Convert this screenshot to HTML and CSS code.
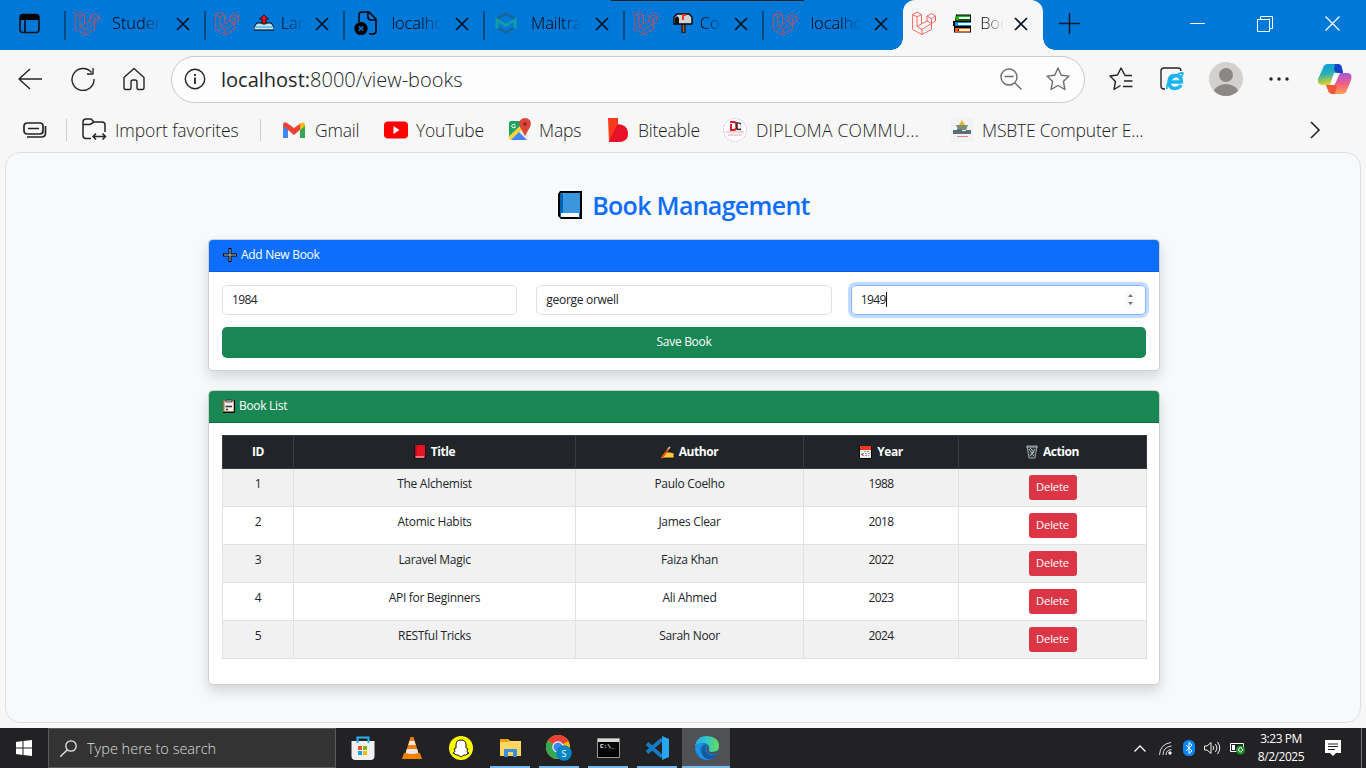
FILE: index.html
```html
<!DOCTYPE html>
<html lang="en">
<head>
<meta charset="utf-8">
<title>Book Management</title>
<link rel="stylesheet" href="styles.css">
</head>
<body>
<svg class="defs" width="0" height="0">
  <symbol id="laravel" viewBox="0 0 24 24"><path fill="none" stroke="currentColor" stroke-width="1" stroke-linejoin="round" d="M.6 3.500 5 1l4.500 2.500L5 6ZM.6 3.500v15L10 23.500l9.500-5v-6L23.500 10V5l-4.200-2.500L15 5v5l-5.500 3V3.500M5 6v9.500l5 2.800 9.500-5.800M5 15.500 9.500 13M10 18.300v5.200M15 5l4.500 2.700L23.500 5M19.500 7.700v4.800L15 10"/></symbol>
  <symbol id="close" viewBox="0 0 14 14"><path d="m1 1 12 12M13 1 1 13" fill="none" stroke="currentColor" stroke-width="1.700"/></symbol>
</svg>
<header class="tabs">
  <div class="tab-actions"><svg width="22" height="22" viewBox="0 0 22 22"><rect x="1" y="1.500" width="19" height="18" rx="3" fill="none" stroke="#101010" stroke-width="1.600"/><path d="M1 7V4q0-3 3-3h13q3 0 3 3v3Z" fill="#000"/><path d="M6 7v12" stroke="#000" stroke-width="1.500"/></svg></div>
  <div class="tab"><svg class="fav"><use href="#laravel"/></svg><span class="tt">Studen</span><svg class="x"><use href="#close"/></svg></div>
  <div class="tab"><svg class="fav"><use href="#laravel"/></svg><span class="tt emo"><svg width="20" height="18" viewBox="0 0 20 18"><path d="M3 9h14l3 4v3H0v-3Z" fill="#b9e6f7" stroke="#000"/><path d="M1 13h18" stroke="#78bfe0" stroke-width="2"/><path d="M10 1 5.500 5H8v5h4V5h2.500Z" fill="#f1121e" stroke="#000" stroke-width=".8"/></svg>Lar</span><svg class="x"><use href="#close"/></svg></div>
  <div class="tab"><svg class="fav" viewBox="0 0 24 24"><path d="M5 11V4q0-3 3-3h7l7 7v12q0 3-3 3h-4M14 1v5q0 3 3 3h5" fill="none" stroke="#000" stroke-width="1.500"/><circle cx="7" cy="17.500" r="6.600"/><path d="m4.700 15.200 4.600 4.600m0-4.600-4.600 4.600" stroke="#0078d7" stroke-width="1.500"/></svg><span class="tt">localho</span><svg class="x"><use href="#close"/></svg></div>
  <div class="tab"><svg class="fav" viewBox="0 0 24 24"><path d="M2 7 12 1l10 6-2 1.500-8-4-8 4ZM2 17l10 6 10-6-2-1.500-8 4-8-4Z" fill="#17659f"/><path d="M3 17.500V9l9 5.500L21 9v8.500" fill="none" stroke="#129da9" stroke-width="3"/></svg><span class="tt">Mailtra</span><svg class="x"><use href="#close"/></svg></div>
  <div class="tab"><svg class="fav"><use href="#laravel"/></svg><span class="tt emo"><svg width="20" height="20" viewBox="0 0 20 20"><path d="M9 11h3v9H9Z" fill="#a8552c" stroke="#000"/><path d="M1 11V4l3-3h12l3 3v7Z" fill="#d2d3d5" stroke="#000" stroke-width="1.400"/><path d="M2 5 4 3l2 2v6H2Z" fill="#111"/><path d="M9 1h4v2h-2v4H9Z" fill="#f03a17"/></svg>Co</span><svg class="x"><use href="#close"/></svg></div>
  <div class="tab"><svg class="fav"><use href="#laravel"/></svg><span class="tt">localho</span><svg class="x"><use href="#close"/></svg></div>
  <div class="tab active"><svg class="fav"><use href="#laravel"/></svg><span class="tt emo"><svg width="20" height="19" viewBox="0 0 20 19"><path d="M3 .5h15v18H1V12H0V7h2Z" /><path d="M4 1.500h13v2H6v2h11v1H3V3Z" fill="#1db31b"/><path d="M6 3h11v2H6ZM4 9h14v2H4ZM6 15h11v2H6Z" fill="#fff"/><path d="M2 8h16v1H5v2h13v1H2Z" fill="#1687d9"/><path d="M2 14h15v1H5v2h12v1H2Z" fill="#f4610d"/></svg>Boo</span><svg class="x"><use href="#close"/></svg></div>
  <svg class="plus" width="21" height="21" viewBox="0 0 21 21"><path d="M10.500 0v21M0 10.500h21" stroke="#001b33" stroke-width="1.500"/></svg>
  <div class="win"><svg width="15" height="15"><path d="M0 7.500h15" stroke="#fff"/></svg><svg width="16" height="16" fill="none" stroke="#fff"><rect x=".5" y="3.500" width="12" height="12"/><path d="M3.500 3V.5h12v12H13"/></svg><svg width="15" height="15"><path d="m.5.5 14 14m0-14-14 14" stroke="#fff" stroke-width="1.200"/></svg></div>
  <i class="strip"></i>
</header>
<nav class="toolbar">
  <svg class="ic back" viewBox="0 0 24 24"><path d="M24 12H1M12 2 1 12l11 10"/></svg>
  <svg class="ic reload" viewBox="0 0 24 24"><path d="M20.500 5.500A11 11 0 1 0 23 12M22 1v6h-6"/></svg>
  <svg class="ic home" viewBox="0 0 24 24"><path d="M2 10.500 12 1.500l10 9V21q0 1.500-1.500 1.500h-4Q15 22.500 15 21v-6q0-2-2-2h-2q-2 0-2 2v6q0 1.500-1.500 1.500h-4Q2 22.500 2 21Z"/></svg>
  <div class="address">
    <svg class="ic info" viewBox="0 0 22 22"><circle cx="11" cy="11" r="9.700"/><path d="M11 9.500V16M11 6v2" stroke-width="1.800"/></svg>
    <span class="url"><b>localhost:</b>8000/view-books</span>
    <svg class="ic mag" viewBox="0 0 22 22"><circle cx="9" cy="9" r="8"/><path d="m15 15 6.500 6.500M4.500 8.500h9"/></svg>
    <svg class="ic star" viewBox="0 0 24 24"><path d="m12 1 3.300 7.200 7.700.9-5.600 5.300 1.500 8.100L12 18.500l-6.900 4 1.500-8.100L1 9.100l7.700-.9Z"/></svg>
  </div>
  <svg class="ic favs" viewBox="0 0 24 24"><path d="M23 8.500h-7L12 1 8.500 8 1 9l5.500 5.500L5 22.500l6.500-4M15 14h8.500M14 19.500h9.500"/></svg>
  <svg class="ic ie" viewBox="0 0 24 24"><path d="M5 22H4q-3 0-3-3V4q0-3 3-3h14q3 0 3 3"/><g fill="none" stroke="#19b4ef"><path d="M21 18q-2 3.500-6 3.500-6 0-6-6.500t6-6.500q6.500 0 6.500 6.500H10" stroke-width="3.500"/><path d="M7 22q-2-5 7-12 6-5 9-4-.5 3-2 4" stroke-width="1.700"/></g></svg>
  <svg class="avatar" viewBox="0 0 34 34"><clipPath id="av"><circle cx="17" cy="17" r="17"/></clipPath><g clip-path="url(#av)"><path d="M0 0h34v34H0Z" fill="#d3d0cd"/><circle cx="17" cy="13" r="7" fill="#8b8786"/><ellipse cx="17" cy="31" rx="12.500" ry="9" fill="#8b8786"/></g></svg>
  <svg class="dots" width="20" height="4"><circle cx="2" cy="2" r="1.700"/><circle cx="10" cy="2" r="1.700"/><circle cx="18" cy="2" r="1.700"/></svg>
  <svg class="copilot" viewBox="0 0 34 32"><defs><linearGradient id="c1" x2=".2" y2="1"><stop stop-color="#1597e5"/><stop offset=".5" stop-color="#22b1b5"/><stop offset="1" stop-color="#e6cf24"/></linearGradient><linearGradient id="c2" x2="0" y2="1"><stop stop-color="#a358dc"/><stop offset=".5" stop-color="#ef5c87"/><stop offset="1" stop-color="#ffa04e"/></linearGradient></defs><path d="M10 1h9q4 0 5 4l1 5h-6q-3 0-4 3l-3 9H5q-6 0-5-6L5 5q1-4 5-4Z" fill="url(#c1)"/><path d="M17 1h3q3 0 4 4l1 5h-5q-3 0-4-4Z" fill="#1843c8"/><path d="M24 31h-9q-4 0-5-4l-2-5h6q3 0 4-3l4-9h7q6 0 4 7l-4 10q-1 4-5 4Z" fill="url(#c2)"/><path d="M17 31h-2q-4 0-5-4l-2-5h6l5 1Z" fill="#f15736"/><path d="m16 10 5 0-5 12h-4Z" fill="#fff"/></svg>
</nav>
<nav class="marks">
  <svg class="m-work" width="24" height="16" fill="none" stroke="#242424" stroke-width="1.700"><rect x="1" y="1" width="19" height="11" rx="3"/><path d="M5 6.500h11M22.500 4v7q0 4-4 4H4"/></svg>
  <i class="sep"></i>
  <span class="mk k1"><svg width="25" height="24" viewBox="0 0 25 24" fill="none" stroke="#242424" stroke-width="1.500"><path d="M9 20.500H4q-3 0-3-3V4q0-3 3-3h5l3 3h8q3 0 3 3v7M1 6.500h7L12 4M11 18.500h12M14 15.500l-3 3 3 3M20.500 15.500l3 3-3 3"/></svg>Import favorites</span>
  <i class="sep"></i>
  <span class="mk k2"><svg width="22" height="17" viewBox="0 0 22 17"><path d="M0 3v13h5V7Z" fill="#4285f4"/><path d="M17 7v9h5V3Z" fill="#34a853"/><path d="M0 3q0-4 4-2l7 5 7-5v6l-7 6-6-5-5-4Z" fill="#ea4335"/><path d="M17 2q5-4 5 2l-5 4Z" fill="#fbbc04"/></svg>Gmail</span>
  <span class="mk k3"><svg width="24" height="18" viewBox="0 0 24 18"><rect width="24" height="17" y=".5" rx="4" fill="#f00"/><path d="m9.500 5 6 4-6 4Z" fill="#fff"/></svg>YouTube</span>
  <span class="mk k4"><svg width="24" height="24" viewBox="0 0 24 24"><path d="M2 3h18v19H2Z" fill="#dce5e2"/><path d="M2 5q0-2 2-2h10v8L2 20Z" fill="#1fa463"/><path d="M2 21 17 9l4 9v4Z" fill="#ece9e3"/><path d="M1 19 13 8l3 3L4 22Z" fill="#fbd33c"/><path d="m4 22 8-8 8 8Z" fill="#4285f4"/><path d="M18 18 13 9q-3-8 5-9 8 1 5 9Z" fill="#df4438"/><circle cx="18" cy="6" r="1.800" fill="#772a24"/><path d="M8.500 7q-3-2-4 1 1 3.500 4 1H7" stroke="#fff" fill="none"/></svg>Maps</span>
  <span class="mk k5"><svg width="20" height="24" viewBox="0 0 20 24"><path d="M0 0h10v7q10 1 10 9t-10 8H1Z" fill="#fb3a1c"/><path d="M10 6q10 1 10 9 0 9-11 9H1q6-14 9-18Z" fill="#e9102a"/></svg>Biteable</span>
  <span class="mk k6"><svg width="24" height="24" viewBox="0 0 24 24"><circle cx="12" cy="12" r="11.500" fill="#fff" stroke="#d4bdf0" stroke-dasharray="2 1"/><path d="M7 4h3q4 0 4 4t-4 4H8V6" fill="none" stroke="#d51c27" stroke-width="2"/><path d="M18 6q-5-3-5 2 1 5 5 3" fill="none" stroke="#333" stroke-width="1.500"/><path d="M3 14h18M5 17h14" stroke="#eaa5ab"/></svg>DIPLOMA COMMU...</span>
  <span class="mk k7"><svg width="22" height="24" viewBox="0 0 22 24"><path d="M0 0h22v24H0Z" fill="#f1f2f4"/><path d="m11 2 3 5H8Z" fill="#eab62d"/><path d="M5 7h12l-2 5H7Z" fill="#789073"/><path d="M2 12h4v-1h5v2h4v-1h5v4H2Z" fill="#5c6d7a"/><path d="M6 18.500h11" stroke="#df7b9e"/></svg>MSBTE Computer E...</span>
  <svg class="m-more" width="12" height="20" fill="none" stroke="#242424" stroke-width="1.600"><path d="m2 2 8 8-8 8"/></svg>
</nav>
<main class="page">
  <div class="container">
    <h1><svg width="24" height="28" viewBox="0 0 24 28"><path d="M2 0h22v28H3l-3-3V3Z"/><path d="M2 3 4 2h18v20H2Z" fill="#3a96dd"/><path d="M2 3h3v23H2Z" fill="#0063b1"/><path d="M3 22h18v4H3Z" fill="#f4f8fc"/><path d="M5 27h16v-5h1v5Z" fill="#0063b1"/></svg>Book Management</h1>
    <section class="card">
      <div class="card-header blue"><svg width="14" height="14" viewBox="0 0 14 14"><path d="M7 0v14M0 7h14" stroke="#000" stroke-width="3"/><path d="M7 1v12M1 7h12" stroke="#c4c9c9"/></svg><span>Add New Book</span></div>
      <div class="card-body">
        <div class="fields"><div class="field num"><span>1984</span></div><div class="field"><span>george orwell</span></div><div class="field num focus"><span>1949</span><i class="caret"></i><span class="spin"><svg width="5" height="11"><path d="M0 3 2.500 0 5 3ZM0 8l2.500 3L5 8Z" fill="#777"/></svg></span></div></div>
        <div class="save">Save Book</div>
      </div>
    </section>
    <section class="card list">
      <div class="card-header green"><svg width="12" height="14" viewBox="0 0 12 14"><path d="M0 1h12v13H0Z" fill="#a96f43"/><path d="M1.500 2.500h9V12h-9Z" fill="#eee"/><path d="M0 13.500h11.500V1" fill="none" stroke="#000"/><path d="M3 1h6v2H3Z" fill="#bbb" stroke="#222" stroke-width=".7"/><path d="M2.500 7.500h6.500M3 10.500h2" stroke="#333" stroke-width="1.300"/></svg><span>Book List</span></div>
      <div class="card-body">
        <table>
          <colgroup><col class="c1"><col class="c2"><col class="c3"><col class="c4"><col class="c5"></colgroup>
          <thead><tr><th>ID</th>
          <th><svg width="12" height="14" viewBox="0 0 12 14"><path d="M0 0h12v14H1L0 13Z" fill="#111"/><path d="M1 0h10v13H1Z" fill="#e81224"/><path d="M1 0h1.500v13H1Z" fill="#a91020"/><path d="M1.500 12H10" stroke="#f3dadd"/></svg>Title</th>
          <th><svg width="13" height="13" viewBox="0 0 13 13"><path d="m0 11 4-5h5l4 1v5H3l-3 1Z" fill="#ffc83d" stroke="#000" stroke-width=".7"/><path d="M1 12 8 2" stroke="#eb551b" stroke-width="1.800"/><path d="m7 3 2-2" stroke="#e8c4aa" stroke-width="1.500"/></svg>Author</th>
          <th><svg width="13" height="14" viewBox="0 0 13 14"><path d="M0 1h13v13H0Z" fill="#000"/><path d="M1 4h11v9H1Z" fill="#eee"/><path d="M1 1h11v4H1Z" fill="#f03a17"/><path d="M5 6.500h6M3 8.500h8M3 10.500h7" stroke="#999" stroke-dasharray="2 1"/><path d="M2 9.500h2" stroke="#d33"/></svg>Year</th>
          <th><svg width="12" height="14" viewBox="0 0 12 14"><path d="M1 1h10L9 13H3Z" fill="#343c40" stroke="#9da5a8"/><path d="M0 2h12M3 4l5 7M9 4l-5 7M4 3l4 4-3 3" stroke="#a8b1b4" fill="none"/></svg>Action</th></tr></thead>
          <tbody>
          <tr><td>1</td><td>The Alchemist</td><td>Paulo Coelho</td><td class="num">1988</td><td><span class="del">Delete</span></td></tr>
          <tr><td>2</td><td>Atomic Habits</td><td>James Clear</td><td class="num">2018</td><td><span class="del">Delete</span></td></tr>
          <tr><td>3</td><td>Laravel Magic</td><td>Faiza Khan</td><td class="num">2022</td><td><span class="del">Delete</span></td></tr>
          <tr><td>4</td><td>API for Beginners</td><td>Ali Ahmed</td><td class="num">2023</td><td><span class="del">Delete</span></td></tr>
          <tr><td>5</td><td>RESTful Tricks</td><td>Sarah Noor</td><td class="num">2024</td><td><span class="del">Delete</span></td></tr>
          </tbody>
        </table>
      </div>
    </section>
  </div>
</main>
<footer class="taskbar">
  <div class="start"><svg width="16" height="16" viewBox="0 0 16 16"><path d="m0 2 6.500-1v6.500H0ZM7.500 1 16 0v7.500H7.500ZM0 8.500h6.500V15L0 14ZM7.500 8.500H16V16l-8.500-1Z" fill="#fff"/></svg></div>
  <div class="search"><svg width="17" height="17" fill="none" stroke="#e6e6e6" stroke-width="1.300"><circle cx="11" cy="6" r="5.200"/><path d="m7.300 9.700-7 7"/></svg><span>Type here to search</span></div>
  <div class="apps">
    <div><svg width="24" height="24" viewBox="0 0 24 24"><path d="M6.500 7V1.500h11V7" stroke="#20b5ef" stroke-width="2" fill="none"/><path d="M.5 5h23v15q0 4-4 4h-15q-4 0-4-4Z" fill="#f1f1f1"/><path d="M6.500 5v2M17.500 5v2" stroke="#20b5ef" stroke-width="2"/><path d="M7 10h4v4H7Z" fill="#f25022"/><path d="M12 10h4v4h-4Z" fill="#7fba00"/><path d="M7 15h4v4H7Z" fill="#00a4ef"/><path d="M12 15h4v4h-4Z" fill="#ffb900"/></svg></div>
    <div><svg width="22" height="24" viewBox="0 0 22 24"><path d="M3 17h16l2 6H1Z" fill="#f38300"/><path d="M9.500 1h3L18 19q-7 3-14 0Z" fill="#f57e00"/><path d="M8.500 5h5l1.200 4H7.200ZM5.800 13h10.400l1 4Q11 19 4.800 17Z" fill="#e8e8e8"/></svg></div>
    <div><svg width="24" height="24" viewBox="0 0 24 24"><circle cx="12" cy="12" r="12" fill="#fffc00"/><path d="M12 4q5 0 5 5v3l2 1-1 2q0 2 2 2l-2 1-1 1h-2l-3 2-3-2H7l-1-1-2-1q2-1 2-2l-1-2 2-1V9q0-5 5-5Z" fill="#fff" stroke="#111" stroke-width="1"/></svg></div>
    <div class="open"><svg width="23" height="20" viewBox="0 0 23 20"><path d="M1 1h8l2 2h11v15H1Z" fill="#ffd661"/><path d="M1 1h8l1 3H1Z" fill="#e5a200"/><path d="M5 19V11h13v8h-4v-5H9v5Z" fill="#3b8ede"/></svg></div>
    <div class="open"><svg width="26" height="26" viewBox="0 0 26 26"><circle cx="12" cy="12" r="12" fill="#fbbc05"/><path d="M12 12 1.600 6A12 12 0 0 1 22.400 6Z" fill="#ea4335"/><path d="M12 12 1.600 6A12 12 0 0 0 12 24l6-9Z" fill="#34a853"/><path d="M12 6h10.400q-4-6-10.400-6Z" fill="#ea4335"/><circle cx="12" cy="12" r="5.700" fill="#fff"/><circle cx="12" cy="12" r="4.600" fill="#4285f4"/><circle cx="18" cy="18" r="7.800" fill="#0684c6"/><text x="18" y="21.500" class="badge">S</text></svg></div>
    <div class="open"><svg width="23" height="20" viewBox="0 0 23 20"><path d="M.5.5h22v19H.5Z" fill="#050505" stroke="#999"/><path d="M1 1h21v3H1Z" fill="#d8d8d8"/><text x="3" y="10" class="cmd">C:\_</text></svg></div>
    <div class="open"><svg width="24" height="24" viewBox="0 0 24 24"><path d="M17 3.500 2 16.500M2 7.500l15 13" stroke="#167bc4" stroke-width="4"/><path d="m17 0 7 3v18l-7 3Z" fill="#27a5ed"/><path d="m17 6-7 6 7 6Z" fill="#222"/></svg></div>
    <div class="open cur"><svg width="24" height="24" viewBox="0 0 24 24"><defs><linearGradient id="eg"><stop stop-color="#28a8ea"/><stop offset=".5" stop-color="#35c8c6"/><stop offset="1" stop-color="#62dd55"/></linearGradient></defs><circle cx="12" cy="12" r="12" fill="#1573be"/><path d="M0 11Q1 0 12 0q12 1 12 10 0 6-7 6-4 0-3-3Q15 8 9 7 2 7 0 11Z" fill="url(#eg)"/><path d="M9 8q-6 3-3 9 3 6 9 7-12 1-15-11 2-7 9-5Z" fill="#1f93df"/><path d="M11 9q-3 7 3 10 4 2 8-1-3 5-8 5-7-1-7-8 0-5 4-6Z" fill="#12579f"/><path d="M12 10q3 1 2 4-1 2 3 2 4 0 7-2-1 3-3 4-6 1-9-3Z" fill="#505154"/></svg></div>
  </div>
  <div class="tray">
    <svg class="t1" width="12" height="7" fill="none" stroke="#fff" stroke-width="1.300"><path d="m.5 6.500 5.500-5.500 5.500 5.500"/></svg>
    <svg class="t2" width="13" height="13" fill="none" stroke="#ddd"><path d="M.5 13Q1 2 12 .5M4 13Q4 5 12.500 4M7 13q0-5 5.500-5.500"/><circle cx="11" cy="11" r="1.300" fill="#fff"/></svg>
    <svg class="t3" width="12" height="16" viewBox="0 0 12 16"><rect width="12" height="16" rx="5.500" fill="#0a84ff"/><path d="m3 5 6 6-3 2.500v-11L9 5l-6 6" fill="none" stroke="#fff"/></svg>
    <svg class="t4" width="17" height="14" fill="none" stroke="#eee"><path d="M.5 5H3l4-3.500v11L3 9H.5ZM9 5q1.500 2 0 4M11.500 3q3 4 0 8M13.500 1q4.500 6 0 12"/></svg>
    <svg class="t5" width="16" height="14"><path d="M.5 2.500h13v8H.5Z" fill="none" stroke="#fff"/><path d="M2 4h3v5H2Z" fill="#fff"/><circle cx="10.500" cy="9" r="4.500" fill="#189226"/><path d="m8 9 2.500-3L13 9l-2.500 2Z" fill="none" stroke="#fff"/></svg>
    <div class="clock"><span>3:23 PM</span><span>8/2/2025</span></div>
    <svg class="t6" width="16" height="16"><path d="M0 0h16v13h-5l-3 3-3-3H0Z" fill="#fff"/><path d="M3 4h10M3 6.500h10M3 9.500h7" stroke="#222"/></svg>
    <i class="peek"></i>
  </div>
</footer>
</body>
</html>
```
FILE: styles.css
```css
*{box-sizing:border-box}
body{margin:0;width:1366px;height:768px;overflow:hidden;display:flex;flex-direction:column;background:#f7f7f7;font-family:"Open Sans","Noto Sans",sans-serif;color:#212529}
svg{display:block;flex:none}
.defs{position:absolute}
.tabs{height:50px;background:#0078d7;display:flex;align-items:stretch;position:relative;color:#061a2c}
.tab-actions{width:64px;flex:none;padding:13px 0 0 19px}
.tab{width:139.7px;flex:none;display:flex;position:relative;padding:11px 0 0 11px}
.tab::before{content:"";position:absolute;left:0;top:11px;width:2px;height:29px;background:#064a82}
.tab .fav{width:24px;height:24px;color:#b9515f}
.tab .tt{width:51px;margin-left:13px;height:24px;line-height:24px;font-size:16.5px;font-weight:300;letter-spacing:-.1px;overflow:hidden;white-space:nowrap;color:#000;-webkit-mask-image:linear-gradient(90deg,#000 60%,transparent);mask-image:linear-gradient(90deg,#000 60%,transparent)}
.tab .emo{display:flex;align-items:center;gap:7px;margin-left:15px;width:51px}
.tab .x{width:14px;height:14px;margin:6px 14px 0 auto;color:#04121f}
.tab.active{background:#f7f7f7;border-radius:12px 12px 0 0;width:140px;margin-left:1px}
.tab.active::before{left:-12px;top:38px;width:12px;height:12px;background:radial-gradient(circle at 0 0,#0078d7 11.5px,#f7f7f7 12px)}
.tab.active::after{content:"";position:absolute;right:-12px;bottom:0;width:12px;height:12px;background:radial-gradient(circle at 100% 0,#0078d7 11.5px,#f7f7f7 12px)}
.tab.active .fav{color:#f8675f;margin-left:-2px}
.tab.active .emo{margin-left:17px}
.tab.active .x{margin-right:15px}
.plus{margin:13px 0 0 16px}
.win{margin-left:auto;display:flex;gap:52px;padding:16px 26px 0 0}
.strip{position:absolute;left:611px;top:0;width:193px;height:1px;background:#222}
.toolbar{height:58px;display:flex;align-items:center;padding-left:18px}
.ic{width:24px;height:24px;fill:none;stroke:#242424;stroke-width:1.4;stroke-linejoin:round}
.reload{margin-left:29px}
.home{margin-left:27px}
.address{width:914px;height:47px;margin-left:25px;border:1px solid #cacaca;border-radius:24px;background:#fdfdfd;display:flex;align-items:center;padding:0 14px 0 12px}
.info{width:22px;height:22px}
.url{margin-left:15px;font-size:20px;font-weight:300;white-space:nowrap}
.url b{font-weight:400}
.mag{width:22px;height:22px;margin-left:auto;stroke:#6b6b6b}
.star{margin-left:24px;stroke:#6b6b6b}
.favs{margin-left:24px}
.ie{margin-left:27px}
.avatar{width:34px;height:34px;margin-left:25px}
.dots{margin-left:26px;fill:#242424}
.copilot{width:34px;height:32px;margin-left:29px}
.marks{height:44px;display:flex;align-items:center;padding-left:23px;font-size:17.5px;font-weight:300;color:#1b1b1b;letter-spacing:-.22px}
.sep{width:1px;height:22px;background:#ccc;flex:none}
.m-work + .sep{margin-left:19px}
.mk{display:flex;align-items:center;gap:8px;white-space:nowrap;height:24px;flex:none}
.k1{width:178px;margin-left:15px;letter-spacing:-.08px}
.k2{width:101px;margin-left:22px;gap:10px}
.k3{width:123px}
.k4{width:101px}
.k5{width:115px;gap:10px}
.k6{width:228px;gap:9px;letter-spacing:.25px}
.k7{width:358px;gap:9px}
.page{width:1356px;height:571px;margin:0 0 5px 5px;flex:none;border:1px solid #dedfe1;border-radius:15px;background:#f8f9fa;overflow:hidden;font-size:12px;letter-spacing:-.3px}
.container{width:952px;margin-left:202px}
h1{height:30px;margin:37px 0 19px;display:flex;justify-content:center;align-items:center;gap:10px;font-size:25px;font-weight:600;letter-spacing:-.7px;color:#0d6efd;line-height:30px}
.card{height:132px;background:#fff;border:1px solid #ccd0d3;border-radius:5px;box-shadow:0 6px 13px rgba(0,0,0,.15);overflow:hidden}
.list{height:295px;margin-top:19px}
.card-header{height:32px;padding:0 0 2px 14px;display:flex;align-items:center;gap:4px;color:#fff;font-size:12px;font-weight:400}
.blue{background:#0d6efd;border-bottom:1px solid #0c5ed8}
.green{background:#198754;border-bottom:1px solid #14693f}
.card-body{padding:13px 13px 0 13px}
.fields{display:grid;grid-template-columns:repeat(3,1fr);gap:19px}
.field{height:30px;border:1px solid #dee2e6;border-radius:5px;display:flex;align-items:center;padding:0 9px 1px}
.num{letter-spacing:-.6px}
.focus{border-color:#86b7fe;box-shadow:0 0 0 3px #c2dbfe}
.caret{width:1px;height:15px;background:#111}
.spin{margin-left:auto;padding:3px;background:#fafafa}
.save{height:31px;margin-top:12px;border-radius:5px;background:#198754;color:#fff;text-align:center;line-height:30px}
.list .card-body{padding-top:12px}
table{width:924px;border-collapse:collapse;table-layout:fixed;text-align:center}
.c1{width:71px}.c2{width:282px}.c3{width:228px}.c4{width:155px}.c5{width:188px}
th,td{padding:0;border:1px solid #dee2e6}
th{height:33px;background:#212529;color:#fff;border-color:#373b3e;font-weight:700;line-height:16px;letter-spacing:-.45px}
th svg{display:inline-block;vertical-align:-3px;margin-right:5px}
td{height:38px;vertical-align:top;line-height:30px}
tbody tr:nth-child(odd){background:#f1f1f1}
.del{display:block;width:48px;height:25px;margin:6px auto 0;border-radius:3px;background:#dc3545;color:#fff;line-height:24px;font-size:11.2px;letter-spacing:-.15px}
.taskbar{height:40px;flex:none;background:#222224;color:#fff;display:flex}
.start{width:48px;display:flex;align-items:center;justify-content:center}
.search{width:288px;border:1px solid #5b5b5b;background:#333;display:flex;align-items:center;padding-left:11px;gap:10px;font-size:14.5px;font-weight:300;color:#ddd}
.apps{display:flex;margin-left:2px}
.apps div{width:49px;height:40px;display:flex;align-items:center;justify-content:center;position:relative}
.open svg{margin-left:1px}
.open::after{content:"";position:absolute;left:5px;right:4px;bottom:0;height:2px;background:#76b9ed}
.apps .cur{background:#505154;width:48px;margin-left:1px}
.cur::after{left:0;right:0}
.badge{font:9px "Open Sans";fill:#fff;text-anchor:middle}
.cmd{font:700 6px "Liberation Mono";fill:#fff}
.tray{margin-left:auto;display:flex;align-items:center;padding-right:4px}
.t2{margin-left:13px}.t3{margin-left:11px}.t4{margin-left:9px}.t5{margin-left:9px}
.clock{width:70px;display:flex;flex-direction:column;align-items:center;font-size:12px;line-height:18px;letter-spacing:-.45px;white-space:nowrap}
.t6{margin-left:9px}
.peek{width:1px;height:40px;background:#777;margin-left:20px}
```
